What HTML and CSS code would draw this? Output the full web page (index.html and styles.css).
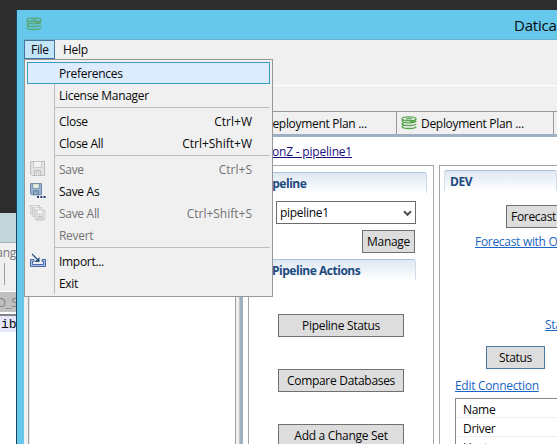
FILE: index.html
```html
<!DOCTYPE html>
<html lang="en">
<head>
<meta charset="utf-8">
<title>Datical</title>
<link rel="stylesheet" href="styles.css">
</head>
<body>
<svg class="defs" width="0" height="0" aria-hidden="true">
  <symbol id="db" viewBox="0 0 16 14">
    <g fill="none" stroke="currentColor" stroke-width="1.3">
      <ellipse cx="8" cy="2.7" rx="7" ry="1.9"/>
      <path d="M5 3.2Q9 2.200 11 3M15 3Q15 5.200 9 5.800M1 4.700Q1 6.800 8 6.800T15 5.100M1 7.500Q1 9.500 8 9.500T15 7.800M1 10.300Q1 12.500 8 12.500T15 10.500M1 5Q1 4 3 3.800M1 7.800Q1 7 3 6.800M1 10.600Q1 9.800 3 9.400"/>
    </g>
  </symbol>
  <symbol id="floppy" viewBox="0 0 15 15">
    <path class="fl-body" d="M.5.5h14v14H2L.5 13z"/>
    <path class="fl-label" d="M3.5.5h8v6h-8z"/>
    <path class="fl-body" d="M4.5 9.5h6v5h-6z"/>
    <path class="fl-label" d="M6.5 11h2v3.500h-2z"/>
  </symbol>
</svg>
<div class="desktop">
  <div class="back-window">
    <div class="back-title"></div>
    <div class="back-tools"><span>ang</span><i></i></div>
    <div class="back-tab"><span>O_S</span></div>
    <div class="back-line">ib</div>
  </div>

  <div class="window">
    <div class="titlebar"><svg class="db dim"><use href="#db"/></svg><span>Datical</span></div>
    <div class="client">
      <div class="menubar"><span class="menu-title open">File</span><span class="menu-title">Help</span></div>
      <div class="toolbar"></div>
      <div class="work">
        <div class="side"><div class="side-box"></div></div>
        <div class="editor">
          <div class="tabs">
            <div class="tab"><svg class="db"><use href="#db"/></svg><span>Deployment Plan ...</span></div>
            <div class="tab"><svg class="db"><use href="#db"/></svg><span>Deployment Plan ...</span></div>
            <div class="tab"></div>
          </div>
          <div class="page">
            <div class="crumb"><a>onZ - pipeline1</a></div>
            <div class="columns">
              <div class="panel pipeline">
                <div class="head head-pipeline">Pipeline</div>
                <div class="select"><span>pipeline1</span><svg width="9" height="7" viewBox="0 0 9 7"><path d="M1 1.200l3.500 3.600L8 1.200" fill="none" stroke="#505050" stroke-width="2"/></svg></div>
                <div class="button manage">Manage</div>
                <div class="head head-actions">Pipeline Actions</div>
                <div class="actions">
                  <div class="button">Pipeline Status</div>
                  <div class="button">Compare Databases</div>
                  <div class="button">Add a Change Set</div>
                </div>
              </div>
              <div class="panel dev">
                <div class="head head-dev">DEV</div>
                <div class="button forecast">Forecast</div>
                <a class="options">Forecast with Options</a>
                <a class="status-link">Status</a>
                <div class="button status">Status</div>
                <a class="edit">Edit Connection</a>
                <div class="table"><div>Name</div><div>Driver</div><div>Hostname</div></div>
              </div>
            </div>
          </div>
        </div>
      </div>
    </div>
  </div>

  <div class="menu">
    <div class="item selected"><span>Preferences</span></div>
    <div class="item"><span>License Manager</span></div>
    <div class="sep"></div>
    <div class="item"><span>Close</span><kbd>Ctrl+W</kbd></div>
    <div class="item"><span>Close All</span><kbd>Ctrl+Shift+W</kbd></div>
    <div class="sep"></div>
    <div class="item off"><svg class="ico" viewBox="0 0 16 16"><use href="#floppy" width="15" height="15"/></svg><span>Save</span><kbd>Ctrl+S</kbd></div>
    <div class="item"><svg class="ico blue" viewBox="0 0 16 16"><use href="#floppy" width="12" height="12.500"/><path d="M7 13h2v2H7zM10.300 13h2v2h-2zM13.500 13h2v2h-2z" fill="#263f70"/></svg><span>Save As</span></div>
    <div class="item off"><svg class="ico" viewBox="0 0 16 16"><use href="#floppy" width="10" height="10"/><use href="#floppy" x="2" y="2" width="10" height="10"/><use href="#floppy" x="4.500" y="4.500" width="11" height="11"/></svg><span>Save All</span><kbd>Ctrl+Shift+S</kbd></div>
    <div class="item off"><span>Revert</span></div>
    <div class="sep"></div>
    <div class="item"><svg class="ico" viewBox="0 0 16 16"><path d="M4 6.500H.5v7h15v-7H12v2h1.500v3h-11v-3H4z" fill="#a9bfe6" stroke="#4a68a6"/><path d="M2 1l6 6" stroke="#23527c" stroke-width="1.200"/><path d="M9.500 4v5h-5z" fill="#23527c"/></svg><span>Import...</span></div>
    <div class="item"><span>Exit</span></div>
  </div>
</div>
</body>
</html>
```
FILE: styles.css
```css
* { box-sizing: border-box; }
body { margin: 0; font: 12px/16px "Open Sans", "Noto Sans", sans-serif; letter-spacing: -.3px; color: #080808; }
.defs { display: block; }
.desktop { position: relative; width: 557px; height: 444px; overflow: hidden; background: #2d2d2d; }
a { text-decoration: underline; color: #1a66c2; white-space: nowrap; }

.back-window { position: absolute; left: 0; top: 213px; width: 16px; height: 231px; overflow: hidden; background: #fff; }
.back-title { height: 30px; background: #c1d5da; border-bottom: 1px solid #a5b3b7; }
.back-tools { height: 48px; background: #f0f0f0; color: #777; }
.back-tools span { display: flex; justify-content: flex-end; height: 20px; align-items: center; }
.back-tools i { display: block; width: 1px; height: 22px; margin-left: 4px; background: #a0a0a0; }
.back-tab { height: 20px; margin-top: 1px; background: #c0c0c0; color: #858585; font-size: 13px; line-height: 20px; }
.back-tab span { display: flex; margin-left: -4px; }
.back-line { margin-top: 2px; height: 18px; border-top: 2px solid #858585; background: #e6e6fc; font: 13px/18px "Liberation Mono", monospace; letter-spacing: 0; padding-left: 1px; }

.window { position: absolute; left: 16px; top: 10px; width: 541px; height: 434px; overflow: hidden; background: #66c9eb; border-left: 1px solid #174557; padding-left: 7px; }
.titlebar { height: 30px; display: flex; align-items: center; justify-content: space-between; border-bottom: 1px solid #69b3ce; font-size: 15px; letter-spacing: -.2px; padding-left: 2px; }
.titlebar span { width: 43px; white-space: nowrap; }
.db { width: 16px; height: 14px; color: #55a34e; flex: none; }
.dim { color: #59a675; margin-top: -1px; }
.client { height: 404px; background: #f0f0f0; }
.menubar { display: flex; height: 19px; }
.menu-title { width: 31px; height: 19px; line-height: 18px; padding-left: 6px; border: 1px solid transparent; margin-right: 1px; }
.menu-title.open { background: #c2e5fa; border-color: #46749c; }
.toolbar { height: 27px; border-bottom: 1px solid #fff; }
.work { display: flex; height: 358px; }
.side { width: 216px; padding: 25px 3px 0 4px; border-right: 1px solid #bfc4ca; }
.side-box { height: 340px; border: 1px solid #a0a0a0; box-shadow: inset 1px 0 #e8e8e8; background: #fff; }
.editor { flex: none; width: 317px; padding-top: 25px; }
.tabs { display: flex; height: 26px; border-top: 1px solid #999; border-bottom: 3px solid #a0b0c3; }
.tab { flex: none; width: 157px; height: 22px; padding-left: 4px; display: flex; align-items: center; gap: 4px; border-right: 1px solid #999; }
.tab span { padding-top: 2px; white-space: nowrap; }
.tab:last-child { width: 3px; border: 0; }
.page { height: 307px; background: #fff; border-left: 3px solid #a0b0c3; }
.crumb { height: 28px; padding: 7px 0 0 29px; }
.crumb a { color: #1b0f80; letter-spacing: -.2px; }
.columns { display: flex; gap: 5px; padding-left: 5px; }
.panel { height: 279px; border: 1px solid #a5a5a5; border-bottom: 0; flex: none; }
.pipeline { width: 186px; padding: 6px 6px 0 12px; }
.dev { width: 118px; border-right: 0; padding: 4px 0 0 4px; overflow: hidden; }
.head { height: 21px; border-top: 1px solid #a9c1da; border-right: 1px solid #d2dce8; border-radius: 3px 3px 0 0; background: linear-gradient(#dee8f3, #fff); color: #1d4a7f; font-weight: 700; letter-spacing: -.48px; line-height: 21px; white-space: nowrap; }
.head-pipeline { padding-left: 1px; }
.head-dev { border-left: 1px solid #d2dce8; padding-left: 5px; }
.select { margin: 8px 5px 0 15px; width: 140px; height: 23px; border: 1px solid #6c6c6c; display: flex; align-items: center; justify-content: space-between; padding: 1px 3px 0; }
.button { display: flex; align-items: center; justify-content: center; height: 23px; border: 1px solid #707070; background: #ddd; white-space: nowrap; letter-spacing: -.3px; padding-top: 1px; }
.manage { width: 53px; margin: 6px 0 0 101px; }
.head-actions { margin: 6px 11px 0 0; padding-left: 11px; }
.actions { width: 126px; margin: 34px 0 0 17px; display: grid; gap: 32px; }
.forecast { width: 62px; justify-content: flex-start; padding-left: 4px; margin: 14px 0 0 62px; }
.dev a { display: block; }
.options { margin: 6px 0 0 31px; }
.status-link { margin: 67px 0 0 101px; }
.status { width: 59px; margin: 13px 0 0 42px; border-color: #4b79a6; }
.edit { margin: 9px 0 0 11px; }
.table { margin: 4px 0 0 11px; border: 1px solid #828790; border-right: 0; height: 60px; }
.table div { height: 19px; line-height: 22px; padding-left: 7px; border-bottom: 1px solid #f0f0f0; }

.menu { position: absolute; left: 24px; top: 59px; width: 249px; height: 238px; border: 1px solid #979797; padding: 2px; background: linear-gradient(#bdbdbd, #bdbdbd) 29px 24px / 1px 210px no-repeat #f0f0f0; }
.item { height: 22px; display: grid; grid-template-columns: 32px 1fr auto; align-items: center; padding-right: 18px; white-space: nowrap; }
.item span, .item kbd { padding-top: 1px; }
.item span { grid-column: 2; }
.item kbd { font: inherit; letter-spacing: 0; }
.selected { background: #dcebfd; border: 1px solid #379dc5; padding-right: 17px; grid-template-columns: 31px 1fr auto; }
.sep { height: 4px; margin-left: 27px; background: linear-gradient(#bdbdbd, #bdbdbd) 0 1px / 100% 1px no-repeat; }
.off { color: #737373; }
.ico { width: 16px; height: 16px; margin-left: 3px; --line: #bdbdbd; --fill: #e2e2e2; --label: #f3f3f3; }
.blue { --line: #526e92; --fill: #9ab4d4; --label: #e7f0df; }
.fl-body { fill: var(--fill); stroke: var(--line); }
.fl-label { fill: var(--label); stroke: var(--line); stroke-width: .7; }
```
